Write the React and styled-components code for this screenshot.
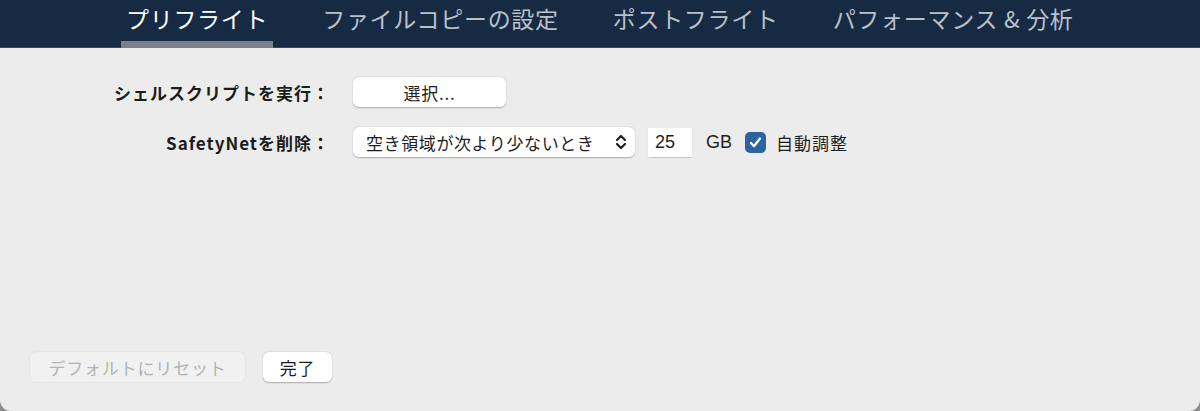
import styled, { createGlobalStyle } from 'styled-components'

const GlobalStyle = createGlobalStyle`
  html, body {
    margin: 0;
    padding: 0;
    background: #8d8d8d;
  }
  body {
    font-family: "Noto Sans CJK JP", "Noto Sans", sans-serif;
  }
`

const Window = styled.div`
  width: 1200px;
  height: 411px;
  display: flex;
  flex-direction: column;
  background: #ececec;
  border-radius: 0 0 11px 11px;
  overflow: hidden;
`

const TabBar = styled.div`
  height: 48px;
  flex-shrink: 0;
  display: flex;
  align-items: stretch;
  gap: 44px;
  padding-left: 121px;
  background: #172a44;
  border-bottom: 1px solid #3c4a5e;
  box-sizing: border-box;
`

const Tab = styled.div`
  position: relative;
  padding: 0 5px;
  display: flex;
  align-items: flex-start;
  padding-top: 2px;
  font-size: 23px;
  letter-spacing: 0.7px;
  line-height: 32px;
  color: ${(p) => (p.$active ? '#ffffff' : '#b9c0ca')};

  &::after {
    content: '';
    display: ${(p) => (p.$active ? 'block' : 'none')};
    position: absolute;
    left: 0;
    right: 0;
    bottom: -1px;
    height: 7px;
    background: #7b8089;
  }
`

const Content = styled.div`
  flex: 1;
  display: flex;
  flex-direction: column;
  padding: 29px 0 29px 0;
`

const Form = styled.div`
  display: grid;
  grid-template-columns: 330px auto;
  column-gap: 23px;
  row-gap: 20px;
  align-items: center;
`

const Label = styled.div`
  text-align: right;
  font-size: 17px;
  font-weight: 700;
  letter-spacing: 1px;
  color: #1c1c1c;
  white-space: nowrap;
`

const Controls = styled.div`
  display: flex;
  align-items: center;
`

const Button = styled.button`
  height: 30px;
  width: ${(p) => p.$width}px;
  border: none;
  border-radius: 6px;
  background: ${(p) => (p.$disabled ? '#f1f1f1' : '#ffffff')};
  color: ${(p) => (p.$disabled ? '#b3b3b3' : '#1e1e1e')};
  box-shadow: ${(p) =>
    p.$disabled ? '0 0 0 0.5px rgba(0,0,0,0.06)' : '0 0.5px 1.5px rgba(0,0,0,0.28)'};
  font-family: inherit;
  font-size: 17px;
  letter-spacing: 0.8px;
  padding: 0;
  cursor: default;
`

const Select = styled.div`
  height: 30px;
  width: 282px;
  box-sizing: border-box;
  display: flex;
  align-items: center;
  justify-content: space-between;
  padding: 0 8px 0 13px;
  background: #fff;
  border-radius: 6px;
  box-shadow: 0 0.5px 1.5px rgba(0, 0, 0, 0.28);
  font-size: 17px;
  letter-spacing: 0.6px;
  color: #1e1e1e;
`

const NumberField = styled.div`
  margin-left: 13px;
  height: 29px;
  width: 44px;
  box-sizing: border-box;
  padding-left: 7px;
  display: flex;
  align-items: center;
  background: #fff;
  box-shadow: 0 0.5px 1px rgba(0, 0, 0, 0.18);
  font-family: "Liberation Sans", "Noto Sans", sans-serif;
  font-size: 18px;
  color: #1e1e1e;
`

const Unit = styled.span`
  margin-left: 14px;
  font-family: "Liberation Sans", "Noto Sans", sans-serif;
  font-size: 18px;
  color: #1e1e1e;
`

const Check = styled.span`
  margin-left: 13px;
  width: 21px;
  height: 21px;
  border-radius: 5px;
  background: #2d62a3;
  display: inline-flex;
  align-items: center;
  justify-content: center;
`

const CheckLabel = styled.span`
  margin-left: 10px;
  font-size: 17px;
  letter-spacing: 1px;
  color: #1e1e1e;
`

const Footer = styled.div`
  margin-top: auto;
  display: flex;
  gap: 18px;
  padding-left: 30px;
`

const tabs = ['プリフライト', 'ファイルコピーの設定', 'ポストフライト', 'パフォーマンス & 分析']

function Chevrons() {
  return (
    <svg width="12" height="18" viewBox="0 0 12 18" fill="none" stroke="#1e1e1e" strokeWidth="2.2" strokeLinecap="round" strokeLinejoin="round">
      <path d="M2 7l4-4 4 4" />
      <path d="M2 11l4 4 4-4" />
    </svg>
  )
}

export default function App() {
  return (
    <>
      <GlobalStyle />
      <Window>
        <TabBar>
          {tabs.map((t, i) => (
            <Tab key={t} $active={i === 0}>
              {t}
            </Tab>
          ))}
        </TabBar>
        <Content>
          <Form>
            <Label>シェルスクリプトを実行：</Label>
            <Controls>
              <Button $width={153}>選択...</Button>
            </Controls>
            <Label>SafetyNetを削除：</Label>
            <Controls>
              <Select>
                <span>空き領域が次より少ないとき</span>
                <Chevrons />
              </Select>
              <NumberField>25</NumberField>
              <Unit>GB</Unit>
              <Check>
                <svg width="15" height="15" viewBox="0 0 15 15" fill="none" stroke="#fff" strokeWidth="2.2" strokeLinecap="round" strokeLinejoin="round">
                  <path d="M3 8l3 3.2L12 3.5" />
                </svg>
              </Check>
              <CheckLabel>自動調整</CheckLabel>
            </Controls>
          </Form>
          <Footer>
            <Button $width={215} $disabled>デフォルトにリセット</Button>
            <Button $width={69}>完了</Button>
          </Footer>
        </Content>
      </Window>
    </>
  )
}
